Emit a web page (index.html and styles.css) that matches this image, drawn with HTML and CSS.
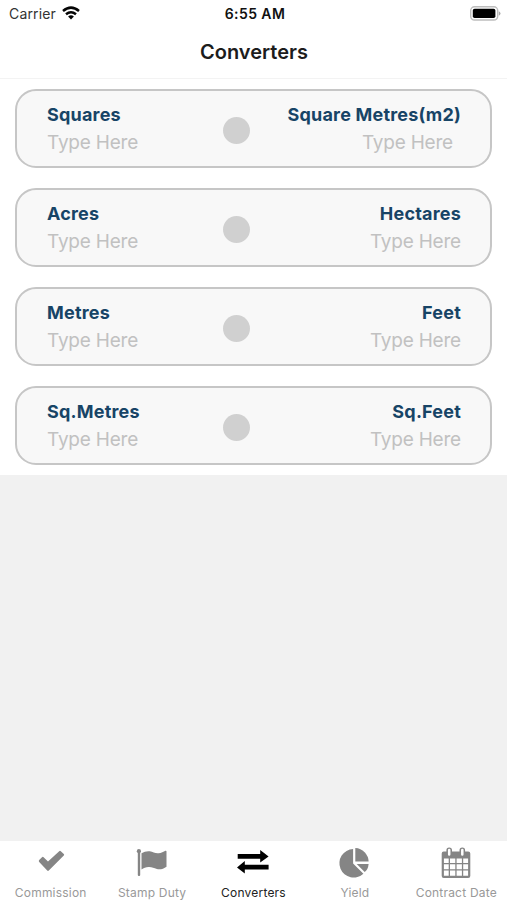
FILE: index.html
```html
<!DOCTYPE html>
<html lang="en">
<head>
<meta charset="utf-8">
<title>Converters</title>
<link rel="stylesheet" href="styles.css">
</head>
<body>
<header class="top">
  <div class="status">
    <div class="carrier"><span>Carrier</span>
      <svg class="wifi" width="18" height="14" viewBox="0 0 18 14" fill="none" stroke="#050505" stroke-width="2.5"><path d="M1 5Q9-1.8 17 5M4 8.3Q9 4.2 14 8.3"/><path d="M6.1 10.5Q9 8.2 11.9 10.5L9 13.5Z" fill="#050505" stroke="none"/></svg>
    </div>
    <time class="clock">6:55 AM</time>
    <svg class="battery" width="31" height="15" viewBox="0 0 31 15"><rect x=".7" y=".8" width="27" height="13.2" rx="3.8" fill="#fff" stroke="#bdbdbd" stroke-width="1.4"/><rect x="2.8" y="2.8" width="22.6" height="9.2" rx="1.8"/><path d="M28.8 5.3q1.7.8 1.7 2.2t-1.7 2.2z" fill="#aaa"/></svg>
  </div>
  <h1 class="title">Converters</h1>
</header>
<main class="list">
  <section class="card">
    <div class="field"><h2 class="label">Squares</h2><span class="hint">Type Here</span></div>
    <i class="dot"></i>
    <div class="field end"><h2 class="label">Square Metres(m2)</h2><span class="hint inset">Type Here</span></div>
  </section>
  <section class="card">
    <div class="field"><h2 class="label">Acres</h2><span class="hint">Type Here</span></div>
    <i class="dot"></i>
    <div class="field end"><h2 class="label">Hectares</h2><span class="hint">Type Here</span></div>
  </section>
  <section class="card">
    <div class="field"><h2 class="label">Metres</h2><span class="hint">Type Here</span></div>
    <i class="dot"></i>
    <div class="field end"><h2 class="label">Feet</h2><span class="hint">Type Here</span></div>
  </section>
  <section class="card">
    <div class="field"><h2 class="label">Sq.Metres</h2><span class="hint">Type Here</span></div>
    <i class="dot"></i>
    <div class="field end"><h2 class="label">Sq.Feet</h2><span class="hint">Type Here</span></div>
  </section>
</main>
<nav class="tabs">
  <a class="tab"><svg width="34" height="34" viewBox="0 0 34 34"><path d="M5.2 16L8 13.2Q8.8 12.5 9.6 13.2L14 17.4L25.2 7.2Q26 6.5 26.8 7.2L29.8 10Q30.6 10.8 29.8 11.6L14.8 26.6Q14 27.4 13.2 26.6L5.2 18Q4.3 17 5.2 16Z" fill="currentColor"/></svg><span>Commission</span></a>
  <a class="tab"><svg width="34" height="34" viewBox="0 0 34 34" fill="currentColor"><circle cx="3.9" cy="7.2" r="2.1"/><rect x="2.8" y="8" width="2.4" height="24" rx="1"/><path transform="translate(-.9 -.5)" d="M7.4 9.8C10 8.3 13 7.3 15.7 7.8C19 8.3 21 10.2 24.5 9.8C27 9.5 29.6 8.2 31.3 7.2Q32.4 7 32.4 8V23.2C29.6 25.3 26 26.3 22.8 25.5C19.8 24.8 17.7 23.4 14.4 23.6C11.8 23.8 9.5 24.8 7.4 26Z"/></svg><span>Stamp Duty</span></a>
  <a class="tab active"><svg width="34" height="34" viewBox="0 0 34 34" fill="currentColor"><path d="M1.7 10H24.2V6L32.6 12.4L24.2 18.4V14.8H1.7ZM32.6 20.8H8.8V17L1 23.4L8.8 29.4V25.6H32.6Z"/></svg><span>Converters</span></a>
  <a class="tab"><svg width="34" height="34" viewBox="0 0 34 34" fill="currentColor"><g transform="translate(-.6 -1)"><path d="M15.7 6V20.6L26 30.8A14.3 14.3 0 1 1 15.7 6Z"/><path d="M17.9 5A13.9 13.9 0 0 1 31.2 18.5H17.9Z"/><path d="M19.3 20.9H31.2Q30.8 26.2 27.3 29.1Z"/></g></svg><span>Yield</span></a>
  <a class="tab"><svg width="34" height="34" viewBox="0 0 34 34"><g transform="translate(0 -1)"><path fill="currentColor" fill-rule="evenodd" d="M4.7 8.5H29.2Q31.3 8.5 31.3 10.6V33Q31.3 35 29.2 35H4.7Q2.7 35 2.7 33V10.6Q2.7 8.5 4.7 8.5ZM4.9 15.4V20H9.7V15.4ZM11 15.4V20H16.3V15.4ZM17.6 15.4V20H22.9V15.4ZM24.2 15.4V20H29.1V15.4ZM4.9 21.3V26.2H9.7V21.3ZM11 21.3V26.2H16.3V21.3ZM17.6 21.3V26.2H22.9V21.3ZM24.2 21.3V26.2H29.1V21.3ZM4.9 27.5V32.8H9.7V27.5ZM11 27.5V32.8H16.3V27.5ZM17.6 27.5V32.8H22.9V27.5ZM24.2 27.5V32.8H29.1V27.5Z"/><path d="M10.2 7.2V11.2M23.3 7.2V11.2" stroke="currentColor" stroke-width="5.6" stroke-linecap="round"/><path d="M10.2 7V11.4M23.3 7V11.4" stroke="#fff" stroke-width="2.5" stroke-linecap="round"/></g></svg><span>Contract Date</span></a>
</nav>
</body>
</html>
```

FILE: styles.css
```css
* { box-sizing: border-box; }

body {
  margin: 0;
  height: 900px;
  display: flex;
  flex-direction: column;
  background: #f1f1f1;
  font-family: Inter, "Liberation Sans", sans-serif;
}

.top {
  height: 79px;
  background: #fff;
  border-bottom: 1px solid #f3f3f3;
}

.status {
  display: grid;
  grid-template-columns: 1fr auto 1fr;
  align-items: center;
  height: 27px;
  padding: 0 6px 0 9px;
}

.carrier {
  display: flex;
  align-items: center;
  gap: 6px;
  font-size: 14px;
  letter-spacing: 0.15px;
  color: #333;
}

.wifi { margin-top: -2px; }

.clock {
  font-size: 14px;
  font-weight: 600;
  letter-spacing: 0.4px;
  color: #111;
}

.battery { justify-self: end; margin-top: -1px; }

.title {
  margin: 12px 0 0;
  padding-left: 1px;
  font-size: 20px;
  line-height: 26px;
  font-weight: 600;
  text-align: center;
  color: #1c1c1c;
}

.list {
  display: flex;
  flex-direction: column;
  gap: 20px;
  padding: 10px 15px;
  background: #fff;
}

.card {
  display: grid;
  grid-template-columns: 175.5px 27px 1fr;
  height: 79px;
  padding: 11px 29px 0 30px;
  border: 2px solid #c6c6c6;
  border-radius: 21px;
  background: #f8f8f8;
}

.field { display: flex; flex-direction: column; }

.end { align-items: flex-end; }

.label {
  margin: 0;
  font-size: 18px;
  line-height: 26px;
  font-weight: 700;
  letter-spacing: 0.2px;
  color: #174466;
  white-space: nowrap;
}

.hint {
  font-size: 19px;
  line-height: 30px;
  letter-spacing: -0.2px;
  color: #c1c1c1;
}

.inset { margin-right: 8px; }

.dot {
  width: 27px;
  height: 27px;
  margin-top: 15px;
  border-radius: 50%;
  background: #d0d0d0;
}

.tabs {
  display: grid;
  grid-template-columns: repeat(5, 1fr);
  height: 59px;
  margin-top: auto;
  background: #fff;
}

.tab {
  display: flex;
  flex-direction: column;
  align-items: center;
  padding-top: 3px;
  font-size: 12px;
  line-height: 16px;
  letter-spacing: 0.2px;
  white-space: nowrap;
  color: #858585;
}

.tab svg { overflow: visible; }

.tab span { margin-top: 7px; color: #999; }

.active { color: #000; }

.active span { color: #222; }
```
